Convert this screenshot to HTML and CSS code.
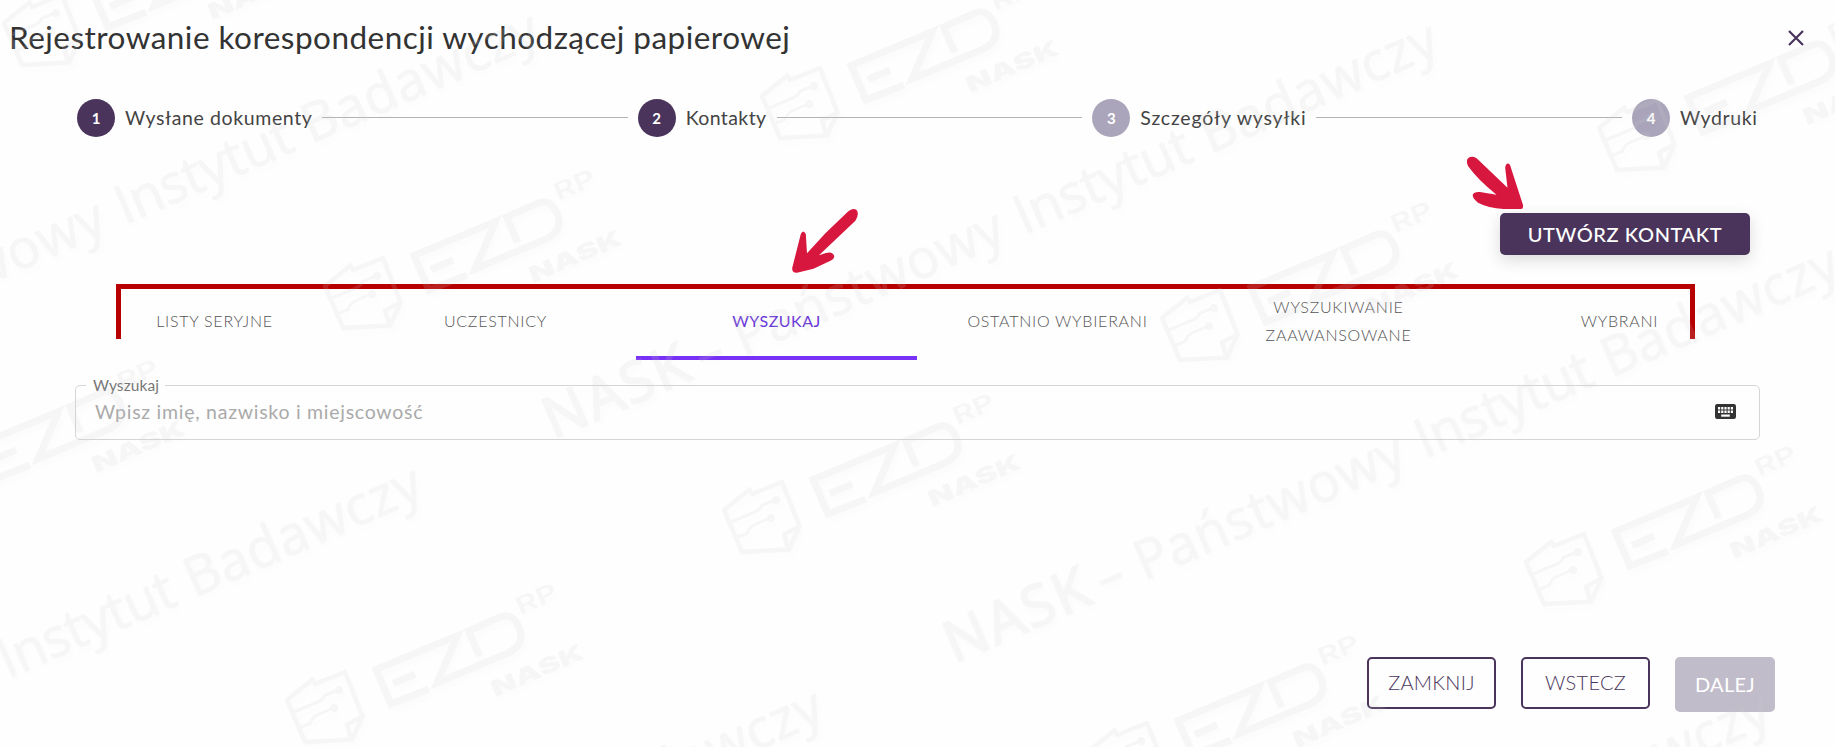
FILE: index.html
```html
<!DOCTYPE html>
<html lang="pl">
<head>
    <meta charset="UTF-8">
    <meta name="viewport" content="width=device-width, initial-scale=1.0">
    <title>Rejestrowanie korespondencji wychodzącej papierowej</title>
    <link rel="stylesheet" href="styles.css">
</head>
<body>
    <div class="dialog">
        <header class="dialog-header">
            <h1>Rejestrowanie korespondencji wychodzącej papierowej</h1>
            <button class="close-button" aria-label="Zamknij okno">
                <svg width="16" height="16" viewBox="0 0 16 16"><path d="M1 1L15 15M15 1L1 15"/></svg>
            </button>
        </header>

        <!-- Stepper -->
        <nav class="stepper">
            <div class="step"><span class="step-number">1</span><span class="step-label label-1">Wysłane dokumenty</span></div>
            <span class="step-line"></span>
            <div class="step"><span class="step-number">2</span><span class="step-label label-2">Kontakty</span></div>
            <span class="step-line"></span>
            <div class="step inactive"><span class="step-number">3</span><span class="step-label label-3">Szczegóły wysyłki</span></div>
            <span class="step-line"></span>
            <div class="step inactive"><span class="step-number">4</span><span class="step-label label-4">Wydruki</span></div>
        </nav>

        <div class="toolbar">
            <button class="btn btn-create">UTWÓRZ KONTAKT</button>
        </div>

        <!-- Tabs -->
        <div class="tabs">
            <div class="tabs-frame"></div>
            <a class="tab">LISTY SERYJNE</a>
            <a class="tab">UCZESTNICY</a>
            <a class="tab active">WYSZUKAJ</a>
            <a class="tab">OSTATNIO WYBIERANI</a>
            <a class="tab">WYSZUKIWANIE<br>ZAAWANSOWANE</a>
            <a class="tab">WYBRANI</a>
        </div>

        <fieldset class="search-field">
            <legend>Wyszukaj</legend>
            <span class="placeholder">Wpisz imię, nazwisko i miejscowość</span>
            <svg class="keyboard" width="21" height="15" viewBox="0 0 21 15">
                <rect width="21" height="15" rx="2.2"/>
                <path d="M3 4.3H18M3 7.7H18" stroke="#fff" stroke-width="2.4" stroke-dasharray="2.2 1"/>
                <path d="M6.2 11.6H14.8" stroke="#fff" stroke-width="2.2"/>
            </svg>
        </fieldset>

        <footer class="actions">
            <button class="btn btn-outline">ZAMKNIJ</button>
            <button class="btn btn-outline">WSTECZ</button>
            <button class="btn btn-disabled" disabled>DALEJ</button>
        </footer>
    </div>

    <!-- Watermark -->
    <svg class="watermark" width="1835" height="747" viewBox="0 0 1835 747" aria-hidden="true">
        <defs>
            <g id="ezd-logo">
                <g class="wm-icon">
                    <path d="M287 700L312.500 679.500L315 684L345 672L362.500 716.500L352 739.500L305 742Z"/>
                    <path d="M362.500 716.500L347 724.500L351.500 739.500"/>
                    <path class="thin" d="M294 712L319 701.500Q323 700 324.500 695.500L338 690M301 727L310 723.500Q313 717 316 715.500L333 708"/>
                </g>
                <circle cx="339" cy="690" r="4"/>
                <circle cx="334" cy="708" r="4"/>
                <path class="wm-ezd" d="M429 689L391 704L376 669.500L457.500 635.500L437 683L508 653Q526 644 519 627Q512 612 500 617L468.500 631L479.500 656M393 683.500L415 674"/>
                <text class="wm-rp" textLength="43" lengthAdjust="spacingAndGlyphs" transform="translate(520 615) rotate(-23.500)">RP</text>
                <text class="wm-nask" textLength="99" lengthAdjust="spacingAndGlyphs" transform="translate(495 697) rotate(-23.500)">NASK</text>
            </g>
            <g id="nask-text">
                <text class="wm-text" transform="rotate(-23.500)"><tspan class="wm-strong" x="-4" textLength="153">NASK</tspan><tspan x="160">–</tspan><tspan x="203" textLength="289">Państwowy</tspan><tspan x="509" textLength="188">Instytut</tspan><tspan x="712" textLength="253">Badawczy</tspan></text>
            </g>
        </defs>
        <g class="wm-layer">
            <use href="#ezd-logo"/>
            <use href="#ezd-logo" x="38" y="-414"/>
            <use href="#ezd-logo" x="-399" y="-224"/>
            <use href="#ezd-logo" x="-283" y="-677"/>
            <use href="#ezd-logo" x="475" y="-604"/>
            <use href="#ezd-logo" x="437" y="-190"/>
            <use href="#ezd-logo" x="875" y="-382"/>
            <use href="#ezd-logo" x="1312" y="-572"/>
            <use href="#ezd-logo" x="1239" y="-138"/>
            <use href="#ezd-logo" x="802" y="51"/>
            <use href="#nask-text" x="958" y="662"/>
            <use href="#nask-text" x="557" y="438"/>
            <use href="#nask-text" x="-342" y="428"/>
            <use href="#nask-text" x="-459" y="882"/>
            <use href="#nask-text" x="-58" y="1105"/>
            <use href="#nask-text" x="889" y="1109"/>
        </g>
    </svg>

    <!-- Arrows pointing at the tabs and the create button -->
    <svg class="arrows" width="1835" height="747" viewBox="0 0 1835 747" aria-hidden="true">
        <path d="M792.200 268L800.800 234Q803.200 229 805.800 234L807 253.300L825.400 233.300L847 212.500Q852 207.500 856 209.500Q860 213 855.400 220.700L837.200 238L819 255.300L826 253Q833 251 834.300 256.500Q834 259 831 260.500L813.500 268.700L797 272.700Q792 273 792.200 268Z"/>
        <path d="M1468 166Q1465 158.500 1470 157Q1475 155.500 1479 160.500L1507.500 187.700L1505.200 168Q1505.500 163.500 1508 163.500Q1510 163.500 1511 168L1523 205Q1523.500 209 1521 209L1503.700 209Q1488 208 1478 202.700Q1472 198 1472.800 194.500Q1474 191.500 1480 192L1496.500 194.700Q1478 180 1468 166Z"/>
    </svg>
</body>
</html>
```
FILE: styles.css
```css
:root {
    --primary: #4a345b;
    --primary-muted: #aaa5ba;
    --accent: #7831f5;
    --frame: #b70000;
    --arrow: #d8173f;
    --border: #d6d6d6;
}

* {
    box-sizing: border-box;
}

body {
    margin: 0;
    background: #fefefe;
    font-family: Lato, "Open Sans", sans-serif;
    color: #333;
    position: relative;
    width: 1835px;
    height: 747px;
    overflow: hidden;
}

.dialog {
    height: 747px;
    display: flex;
    flex-direction: column;
}

.dialog-header {
    display: flex;
    justify-content: space-between;
    align-items: center;
    height: 76px;
    padding: 0 31px 0 9px;
}

h1 {
    margin: 0;
    padding-bottom: 2px;
    font-size: 31.5px;
    font-weight: 400;
    letter-spacing: 0.47px;
    white-space: nowrap;
}

.close-button {
    border: 0;
    padding: 0;
    background: none;
    display: flex;
}

.close-button path {
    stroke: var(--primary);
    stroke-width: 2.2;
    fill: none;
}

/* Stepper */
.stepper {
    display: flex;
    align-items: center;
    gap: 10px;
    margin: 23px 76px 0 77px;
    height: 38px;
}

.step {
    display: flex;
    align-items: center;
    gap: 10px;
    font-size: 19.5px;
    color: #444;
    white-space: nowrap;
}

.step-number {
    width: 38px;
    height: 38px;
    border-radius: 50%;
    background: var(--primary);
    color: #fff;
    font-size: 15px;
    font-weight: 700;
    display: flex;
    align-items: center;
    justify-content: center;
}

.inactive .step-number {
    background: var(--primary-muted);
}

.step-label {
    padding-bottom: 2px;
    letter-spacing: 0.62px;
}

.label-1 { width: 187px; }
.label-2 { width: 81px; letter-spacing: 0.4px; }
.label-3 { width: 166px; letter-spacing: 0.8px; }
.label-4 { width: 79px; }

.step-line {
    flex: 1;
    height: 1px;
    margin-bottom: 2px;
    background: #b3b3b3;
}

/* Buttons */
.btn {
    font-family: inherit;
    font-size: 20px;
    border-radius: 5px;
    border: 0;
    padding: 0 0 2px;
    white-space: nowrap;
}

.toolbar {
    display: flex;
    justify-content: flex-end;
    margin: 76px 85px 0 0;
}

.btn-create {
    width: 250px;
    height: 42px;
    padding-bottom: 0;
    background: var(--primary);
    color: #fff;
    font-weight: 500;
    letter-spacing: 0.6px;
    box-shadow: 0 5px 16px rgba(0, 0, 0, 0.14);
}

/* Tabs */
.tabs {
    position: relative;
    display: grid;
    grid-template-columns: repeat(6, 281px);
    margin: 29px 0 0 74px;
    height: 76px;
}

.tabs-frame {
    position: absolute;
    left: 42px;
    top: 0;
    width: 1579px;
    height: 55px;
    border: 5px solid var(--frame);
    border-bottom: 0;
}

.tab {
    display: flex;
    align-items: center;
    justify-content: center;
    text-align: center;
    padding-bottom: 2px;
    font-size: 16px;
    font-weight: 300;
    line-height: 28px;
    letter-spacing: 0.75px;
    color: #555;
}

.tab.active {
    color: #6937d8;
    font-weight: 400;
    letter-spacing: 0.5px;
    box-shadow: inset 0 -4px var(--accent);
}

/* Search field */
.search-field {
    display: flex;
    align-items: center;
    justify-content: space-between;
    margin: 15px 75px 0;
    padding: 5px 23px 0 19px;
    height: 65px;
    border: 1px solid var(--border);
    border-radius: 5px;
    min-width: 0;
}

.search-field legend {
    margin-left: -9px;
    padding: 0 6px 0 7px;
    font-size: 15.5px;
    line-height: 20px;
    letter-spacing: 0.1px;
    color: #777;
}

.placeholder {
    font-size: 19.5px;
    letter-spacing: 0.73px;
    color: #aaa;
}

.keyboard {
    fill: #333;
}

/* Footer */
.actions {
    display: flex;
    align-items: flex-start;
    gap: 25px;
    justify-content: flex-end;
    margin: auto 60px 35px 0;
}

.btn-outline {
    width: 129px;
    height: 52px;
    border: 2px solid var(--primary);
    background: none;
    color: var(--primary);
    font-weight: 300;
    letter-spacing: 0.3px;
}

.btn-disabled {
    width: 100px;
    height: 55px;
    background: #c0bcca;
    color: #fff;
    letter-spacing: 0.3px;
}

/* Overlays */
.watermark,
.arrows {
    position: absolute;
    left: 0;
    top: 0;
    pointer-events: none;
}

.arrows path {
    fill: var(--arrow);
}

.wm-layer {
    opacity: 0.16;
    fill: #cdcdcd;
    stroke: none;
    filter: drop-shadow(3px 5px 3px rgba(0, 0, 0, 0.08));
}

.wm-icon {
    fill: none;
    stroke: #cdcdcd;
    stroke-width: 4.5;
    stroke-linejoin: round;
}

.wm-icon .thin {
    stroke-width: 3;
}

.wm-ezd {
    fill: none;
    stroke: #cdcdcd;
    stroke-width: 7;
}

.wm-text {
    font-family: "Open Sans", sans-serif;
    font-size: 54px;
    font-weight: 400;
    stroke: #cdcdcd;
    stroke-width: 0.9;
}

.wm-strong {
    font-size: 57px;
    stroke-width: 2;
}

.wm-rp,
.wm-nask {
    font-family: Inter, sans-serif;
    font-size: 24px;
    font-weight: 600;
}

.wm-nask {
    font-size: 22px;
    font-weight: 900;
}
```
